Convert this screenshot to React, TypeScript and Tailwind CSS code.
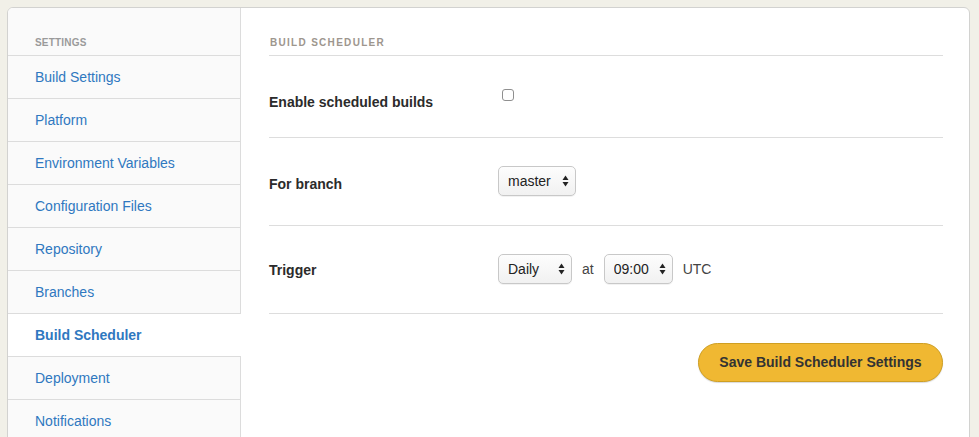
import { useState } from "react";

const NAV = [
  "Build Settings",
  "Platform",
  "Environment Variables",
  "Configuration Files",
  "Repository",
  "Branches",
  "Build Scheduler",
  "Deployment",
  "Notifications",
];

function UpDown() {
  return (
    <svg width="7" height="12" viewBox="0 0 7 12" className="pointer-events-none absolute right-[7px] top-1/2 -translate-y-1/2">
      <path d="M3.5 0.5 L6.5 5 L0.5 5 Z" fill="#222" />
      <path d="M3.5 11.5 L6.5 7 L0.5 7 Z" fill="#222" />
    </svg>
  );
}

function Select({ value, options, width }: { value: string; options: string[]; width: string }) {
  const [v, setV] = useState(value);
  return (
    <div className={`relative h-[30px] ${width}`}>
      <select
        value={v}
        onChange={(e) => setV(e.target.value)}
        className="h-full w-full appearance-none rounded-[5px] border border-[#c8c8c8] bg-gradient-to-b from-[#fdfdfd] to-[#f1f1f1] pl-[9px] text-[14px] text-[#222] shadow-[0_1px_0_rgba(0,0,0,0.05)] outline-none"
      >
        {options.map((o) => (
          <option key={o}>{o}</option>
        ))}
      </select>
      <UpDown />
    </div>
  );
}

export default function App() {
  const [enabled, setEnabled] = useState(false);

  return (
    <div className="h-[437px] overflow-hidden bg-[#f1f0e8] pl-[7px] pt-[7px] font-['Liberation_Sans',Arial,sans-serif]">
      <div className="flex h-[460px] w-[963px] overflow-hidden rounded-t-[6px] border border-[#d2d2d0] bg-white">
        {/* Sidebar */}
        <div className="flex w-[233px] flex-col">
          <div className="flex h-[48px] items-end border-b border-r border-[#dcdcdc] bg-[#fafafa] pb-[6px] pl-[27px]">
            <span className="text-[10px] font-bold leading-[12px] tracking-[0.2px] text-[#9a9a9a]">SETTINGS</span>
          </div>
          {NAV.map((item) => {
            const active = item === "Build Scheduler";
            return (
              <a
                key={item}
                href="#"
                className={`flex h-[43px] items-center border-b border-[#dcdcdc] pl-[27px] text-[14px] text-[#2f78c0] ${
                  active ? "bg-white font-bold" : "border-r bg-[#fafafa]"
                }`}
              >
                {item}
              </a>
            );
          })}
          <div className="flex-1 border-r border-[#dcdcdc] bg-[#fafafa]" />
        </div>

        {/* Main */}
        <div className="flex flex-1 flex-col pl-[28px] pr-[26px]">
          <div className="flex h-[48px] items-end border-b border-[#dddddd] pb-[6px] pl-[1px]">
            <span className="text-[10px] font-bold leading-[12px] tracking-[1.3px] text-[#9d968e]">BUILD SCHEDULER</span>
          </div>

          <div className="flex h-[82px] border-b border-[#dddddd]">
            <div className="w-[229px] pt-[38px] text-[14px] font-bold leading-[16px] text-[#2b2b2b]">Enable scheduled builds</div>
            <div className="pl-[4px] pt-[33px]">
              <button
                onClick={() => setEnabled(!enabled)}
                className={`block h-[12px] w-[12px] rounded-[3px] border border-[#8f8f8f] ${enabled ? "bg-[#2f78c0]" : "bg-white"}`}
              />
            </div>
          </div>

          <div className="flex h-[88px] border-b border-[#dddddd]">
            <div className="w-[229px] pt-[38px] text-[14px] font-bold leading-[16px] text-[#2b2b2b]">For branch</div>
            <div className="pt-[28px]">
              <Select value="master" options={["master", "develop"]} width="w-[78px]" />
            </div>
          </div>

          <div className="flex h-[88px] border-b border-[#dddddd]">
            <div className="w-[229px] pt-[36px] text-[14px] font-bold leading-[16px] text-[#2b2b2b]">Trigger</div>
            <div className="flex items-center gap-[10px] self-start pt-[28px] text-[14px] text-[#444]">
              <Select value="Daily" options={["Daily", "Weekly", "Monthly"]} width="w-[74px]" />
              <span>at</span>
              <Select value="09:00" options={["08:00", "09:00", "10:00"]} width="w-[69px]" />
              <span>UTC</span>
            </div>
          </div>

          <div className="flex justify-end pt-[29px]">
            <button className="h-[39px] w-[245px] rounded-full border border-[#cf9f22] bg-[#f0b832] text-[14px] font-bold text-[#333] shadow-[0_1px_1px_rgba(0,0,0,0.15)]">
              Save Build Scheduler Settings
            </button>
          </div>
        </div>
      </div>
    </div>
  );
}
